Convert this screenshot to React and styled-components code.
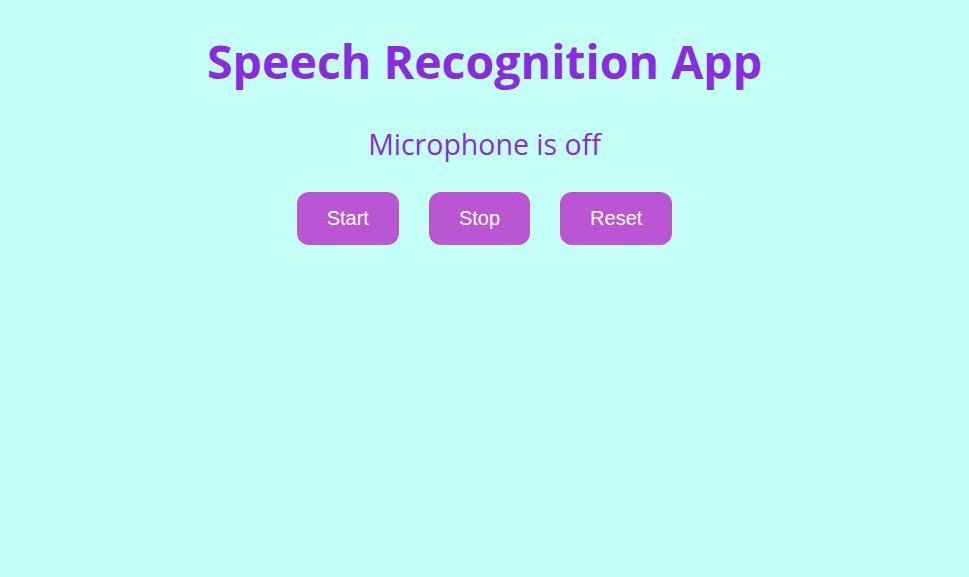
import styled, { createGlobalStyle } from "styled-components";

const GlobalStyle = createGlobalStyle`
  html, body {
    margin: 0;
    padding: 0;
    background-color: #c4fff8;
  }
`;

const Container = styled.div`
  display: flex;
  flex-direction: column;
  align-items: center;
  min-height: 100vh;
  padding-top: 28px;
  box-sizing: border-box;
  font-family: "Open Sans", "Noto Sans", sans-serif;
  color: #8a2be2;
`;

const Title = styled.h1`
  margin: 0;
  font-size: 46.5px;
  font-weight: 700;
  line-height: 66px;
`;

const Status = styled.p`
  margin: 31px 0 0;
  font-size: 28.5px;
  font-weight: 400;
  line-height: 38px;
`;

const ButtonRow = styled.div`
  display: flex;
  gap: 30px;
  margin-top: 29px;
`;

const Button = styled.button`
  border: none;
  border-radius: 12px;
  background-color: #ba55d3;
  color: white;
  font-family: "Liberation Sans", Arial, sans-serif;
  font-size: 20px;
  line-height: 23px;
  padding: 15px 30px;
  cursor: pointer;
`;

function App() {
  return (
    <>
      <GlobalStyle />
      <Container>
        <Title>Speech Recognition App</Title>
        <Status>Microphone is off</Status>
        <ButtonRow>
          <Button>Start</Button>
          <Button>Stop</Button>
          <Button>Reset</Button>
        </ButtonRow>
      </Container>
    </>
  );
}

export default App;
